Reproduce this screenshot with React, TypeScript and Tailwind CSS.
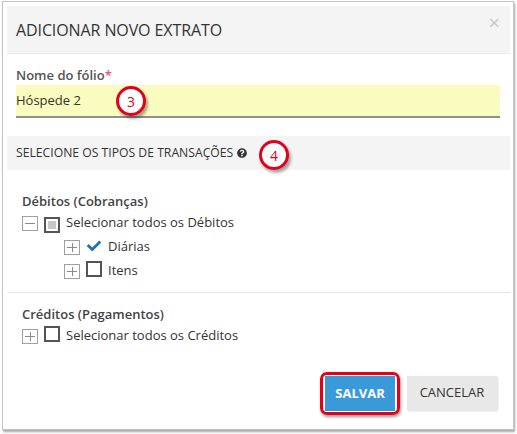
import React from 'react';
import { FaQuestionCircle, FaCheck } from 'react-icons/fa';

const font = { fontFamily: '"Open Sans", "Noto Sans", sans-serif' };

const ToggleBox = ({ open }: { open?: boolean }) => (
  <span className="relative inline-block w-[16px] h-[15px] border border-[#a0a0a0] bg-white shrink-0">
    <span className="absolute left-[2px] right-[2px] top-[6px] h-[1px] bg-[#8a8a8a]" />
    {!open && <span className="absolute top-[2px] bottom-[2px] left-[6.5px] w-[1px] bg-[#8a8a8a]" />}
  </span>
);

const CheckBox = ({ state }: { state: 'empty' | 'partial' | 'checked' }) => {
  if (state === 'checked') {
    return (
      <span className="inline-flex w-[16px] h-[16px] items-center justify-center shrink-0">
        <FaCheck className="text-[#1b72b8] w-[16px] h-[14px]" />
      </span>
    );
  }
  return (
    <span className="inline-flex w-[16px] h-[16px] items-center justify-center border-2 border-[#555] bg-white shrink-0">
      {state === 'partial' && <span className="w-[8px] h-[8px] bg-[#c8c8c8]" />}
    </span>
  );
};

const Row = ({
  indent,
  open,
  state,
  label,
}: {
  indent?: boolean;
  open?: boolean;
  state: 'empty' | 'partial' | 'checked';
  label: string;
}) => (
  <div className={`flex items-center h-[24px] ${indent ? 'pl-[42px]' : ''}`}>
    <ToggleBox open={open} />
    <span className="ml-[6px]">
      <CheckBox state={state} />
    </span>
    <span className="ml-[6px] text-[13px] text-[#333]">{label}</span>
  </div>
);

const Callout = ({ n, className }: { n: number; className: string }) => (
  <span
    className={`absolute w-[30px] h-[30px] rounded-full border-[3px] border-[#e4001b] bg-white flex items-center justify-center text-[14px] text-[#e4001b] shadow-[2px_3px_3px_rgba(0,0,0,0.35)] ${className}`}
  >
    {n}
  </span>
);

export default function App() {
  return (
    <div className="w-[517px] h-[434px] bg-white pt-[1px] pl-[2px]" style={font}>
      <div className="relative w-[512px] h-[429px] border border-[#c4c4c4] bg-white pl-[4px] pr-[3px] pt-[4px] shadow-[1px_2px_2px_rgba(0,0,0,0.35)]">
        {/* cabeçalho */}
        <div className="flex items-center justify-between h-[48px] bg-[#f4f4f4] pl-[9px] pr-[10px] border-b border-[#ebebeb]">
          <span className="text-[16px] text-[#333] tracking-[-0.1px]">ADICIONAR NOVO EXTRATO</span>
          <span className="text-[#c8c8c8] text-[20px] leading-none -mt-[14px]">×</span>
        </div>

        {/* nome do fólio */}
        <div className="relative pl-[9px] pr-[10px] pt-[12px]">
          <div className="text-[13px] font-semibold text-[#555] leading-[19px]">
            Nome do fólio<span className="text-[#f0506e]">*</span>
          </div>
          <div className="h-[33px] bg-[#fafbbe] border-b-2 border-[#8e8e8e] flex items-center text-[13px] text-[#333]">
            Hóspede 2
          </div>
          <Callout n={3} className="left-[109px] top-[32px]" />
        </div>

        {/* tipos de transações */}
        <div className="relative mt-[18px] h-[34px] bg-[#f4f4f4] flex items-center pl-[9px] text-[12.2px] text-[#333]">
          SELECIONE OS TIPOS DE TRANSAÇÕES
          <FaQuestionCircle className="ml-[4px] w-[10px] h-[10px] text-[#333]" />
          <Callout n={4} className="left-[252px] top-[4px]" />
        </div>

        <div className="pl-[15px] pt-[21px]">
          <div className="text-[13px] font-semibold text-[#444] leading-[20px]">Débitos (Cobranças)</div>
          <Row open state="partial" label="Selecionar todos os Débitos" />
          <Row indent state="checked" label="Diárias" />
          <Row indent state="empty" label="Itens" />
        </div>

        <div className="mt-[9px] h-[1px] bg-[#e6e6e6]" />

        <div className="pl-[15px] pt-[11px]">
          <div className="text-[13px] font-semibold text-[#444] leading-[20px]">Créditos (Pagamentos)</div>
          <Row state="empty" label="Selecionar todos os Créditos" />
        </div>

        {/* botões */}
        <div className="flex justify-end gap-[12px] pr-[13px] mt-[28px]">
          <div className="relative">
            <span className="absolute -left-[5px] -right-[5px] -top-[4px] -bottom-[4px] rounded-[7px] border-[3px] border-[#e4001b] shadow-[1px_2px_3px_rgba(0,0,0,0.4)]" />
            <button className="relative w-[70px] h-[35px] bg-[#3a9ad9] text-white text-[13px] font-bold">
              SALVAR
            </button>
          </div>
          <button className="w-[90px] h-[34px] bg-[#e8e8e8] text-[#333] text-[13px] shadow-[1px_1px_2px_rgba(0,0,0,0.15)]">
            CANCELAR
          </button>
        </div>
      </div>
    </div>
  );
}
